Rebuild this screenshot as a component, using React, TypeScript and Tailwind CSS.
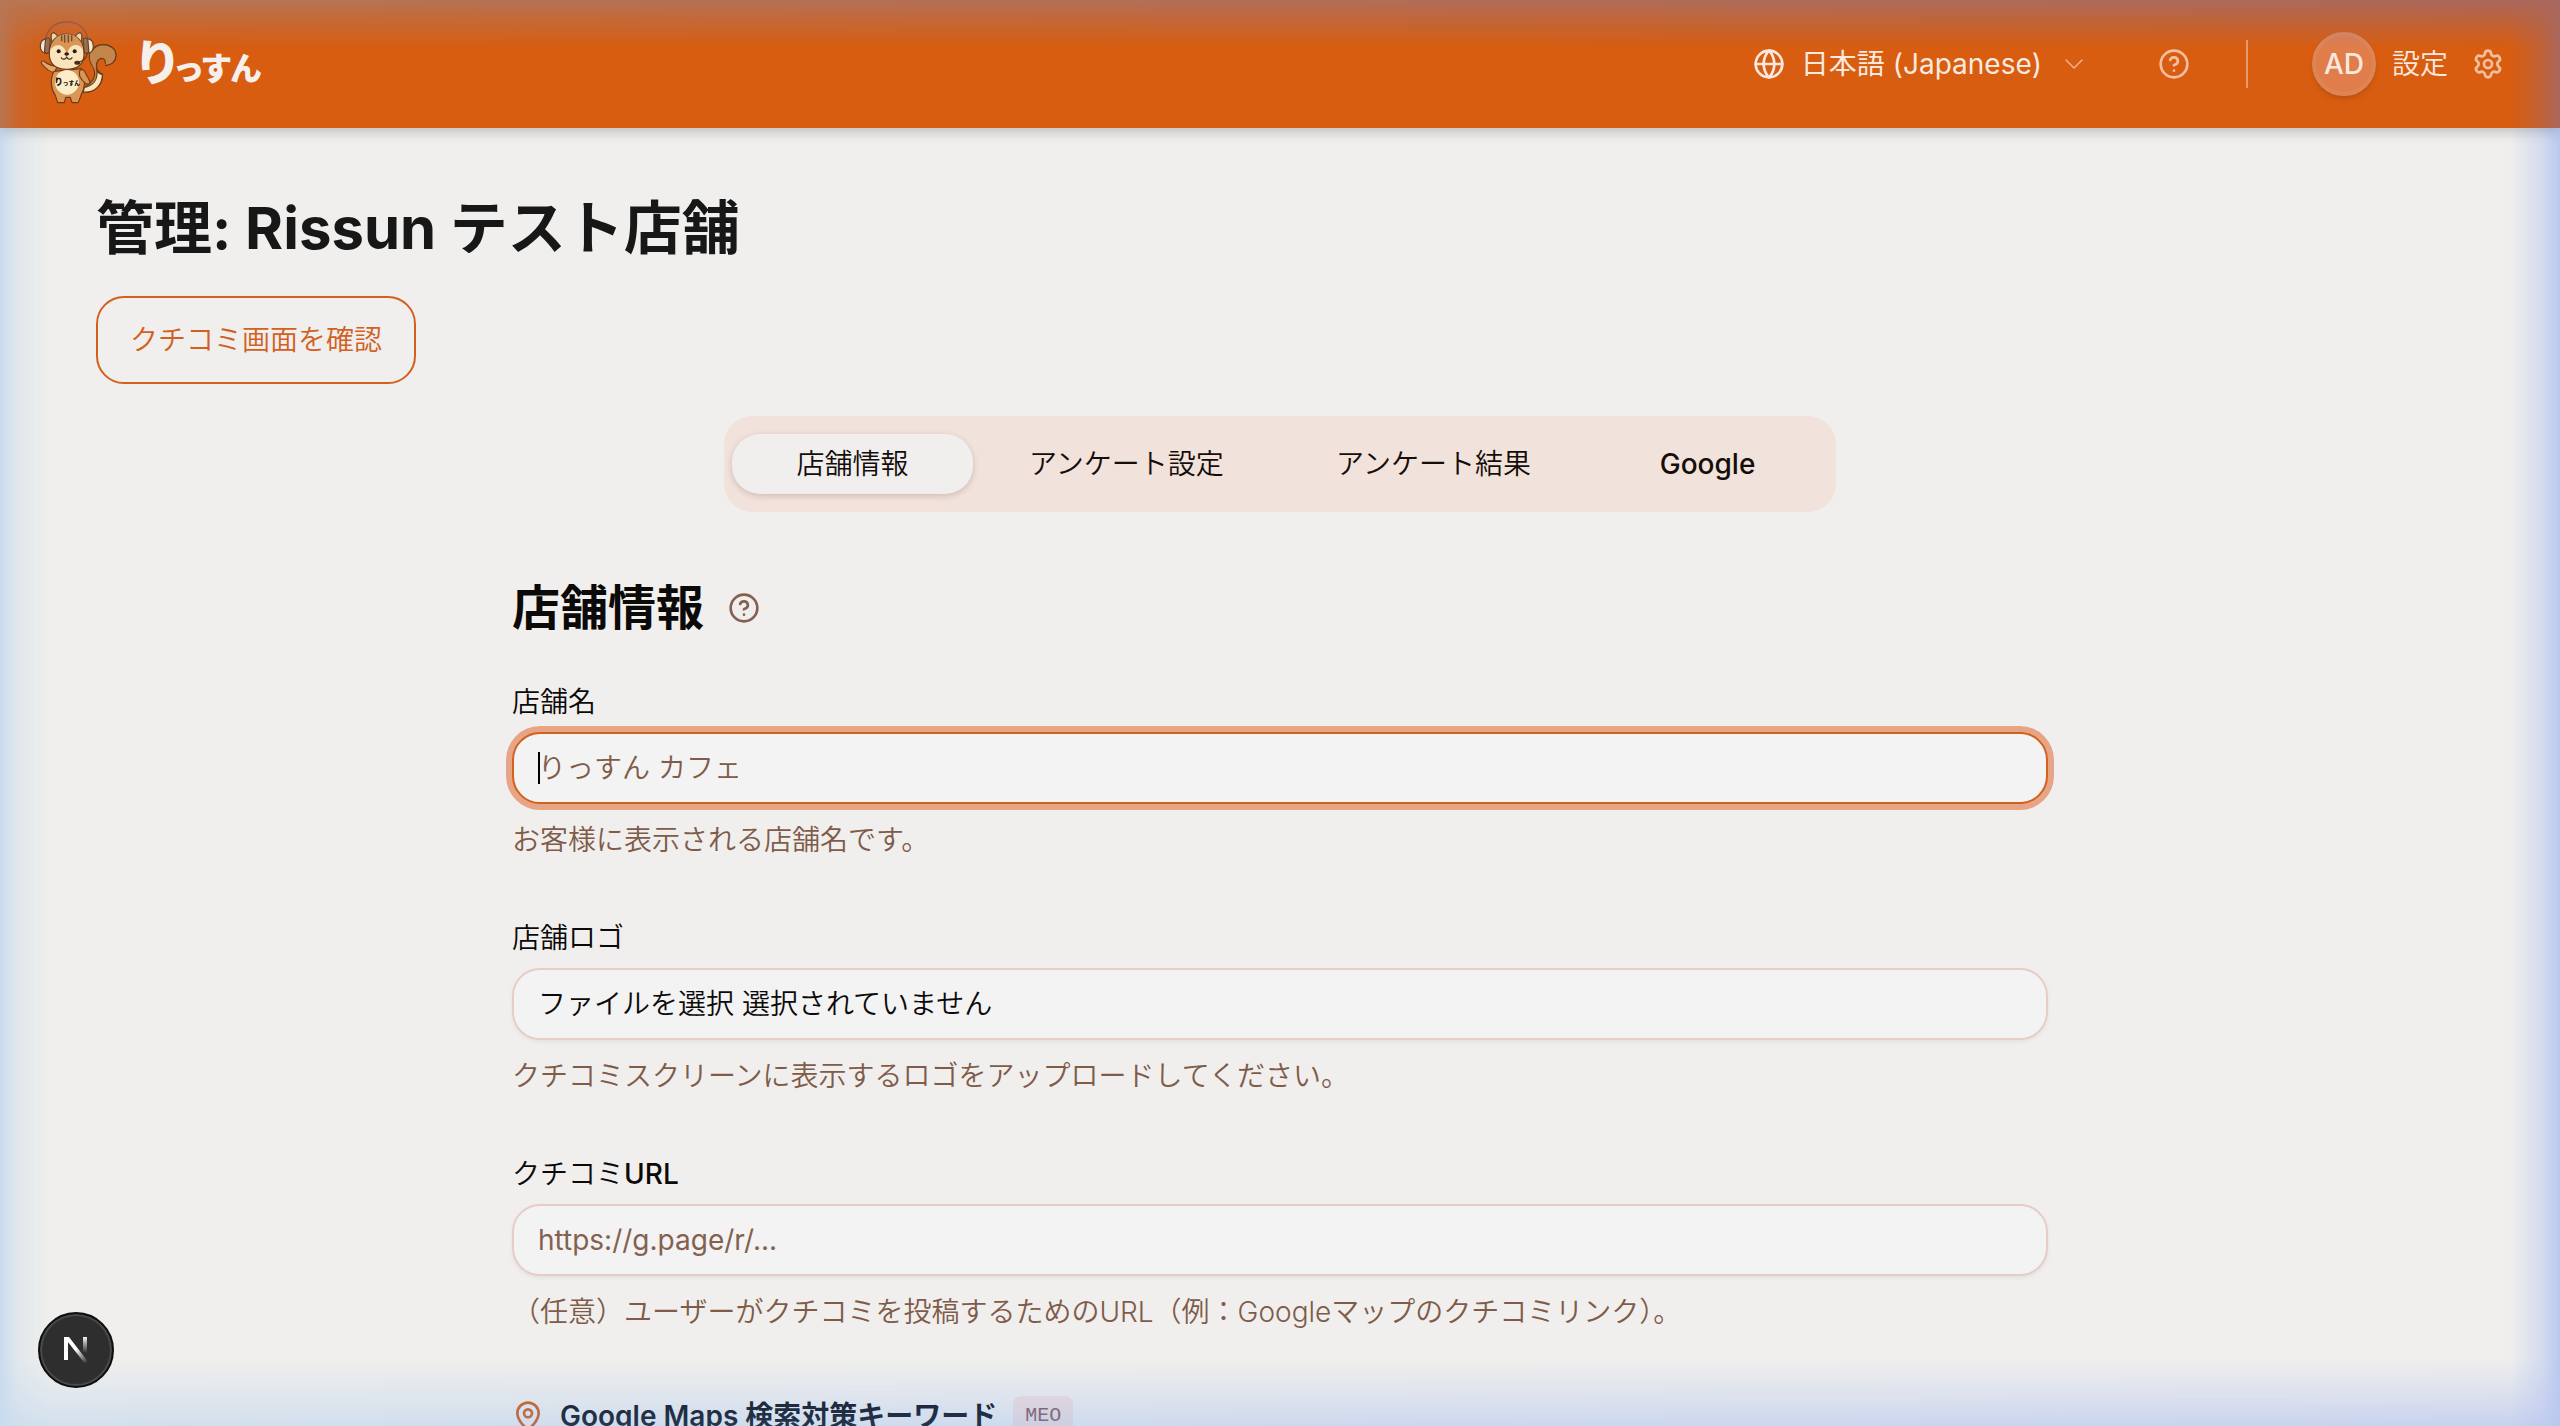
import type { ReactNode } from "react";
import { ChevronDown, CircleHelp, Globe, MapPin, Settings } from "lucide-react";

function Mascot() {
  return (
    <svg viewBox="24 24 240 276" className="h-[92px] w-20" role="img" aria-label="りっすん マスコット">
      <g stroke="#6b3d1c" strokeWidth="3.500" strokeLinejoin="round" strokeLinecap="round">
        <path
          d="M160 246c34 4 58-22 58-52-14-4-22-14-20-28 2-14 12-24 24-20 8 4 9 12 6 20 18-2 30-14 30-28 0-22-20-36-42-34-34 3-46 32-32 58 16 24 16 52-24 70z"
          fill="#c4864a"
        />
        <path d="M160 246c34 4 57-22 57-52-7-2-12-5-16-10 2 28-14 44-38 48z" fill="#fbe6bd" />
        <path
          d="M226 166c18 0 32-12 32-30 0-20-18-32-38-32-34 2-48 30-34 58 4 10 10 20 13 26-4-22 0-36 14-42 10-2 18 8 12 20z"
          fill="#c4864a"
          stroke="none"
        />
        <path d="M226 166c18 0 32-12 32-30 0-20-18-32-38-32-17 1-29 9-34 20" fill="none" />
        <path d="M217 192c-18-8-22-26-14-40 8-12 24-8 23 8" fill="none" />
        <path d="M74 188c-16-2-30-16-38-26-6-8 2-12 9-6 10 8 24 12 36 13z" fill="#e9a666" />
        <path
          d="M72 184c-14 26-8 56 4 72l7 22h20l4-16h14l5 16h19l8-22c12-20 16-52 2-80z"
          fill="#dc9552"
        />
        <path d="M148 184c6-8 14-6 18 4 8 16 16 24 13 33-10 6-22-8-30-22z" fill="#dc9552" />
        <path d="M66 96c-4-16-2-26 2-28 6 0 12 6 18 14zM153 96c4-16 2-26-2-28-6 0-12 6-18 14z" fill="#f6d9a8" />
        <path
          d="M58 136c-2-40 22-64 52-64s54 24 52 64c-2 30-22 42-52 42s-50-12-52-42z"
          fill="#fae4bb"
        />
        <path
          d="M60 122c6-32 24-49 50-49s46 17 51 49c-8-16-22-20-34-15-8 4-13 12-16 26-4-14-10-22-18-26-12-4-26 0-33 15z"
          fill="#dc9552"
          stroke="none"
        />
        <path d="M95 78v14M104 76v20M115 76v20M125 78v14" stroke="#7a4520" strokeWidth="4.500" />
        <path d="M47 88C52 54 76 36 110 36s58 18 64 52" fill="none" stroke="#a04a30" strokeWidth="4" />
        <path d="M50 86c-14 2-19 12-19 22s5 20 17 22z" fill="#f8e8cb" />
        <path d="M172 86c14 2 18 12 18 22s-5 20-16 22z" fill="#f8e8cb" />
        <rect x="45" y="84" width="14" height="46" rx="7" fill="#94704f" transform="rotate(5 52 107)" />
        <rect x="161" y="84" width="14" height="46" rx="7" fill="#94704f" transform="rotate(-5 168 107)" />
        <path d="M172 131c-2 14-12 22-28 26" fill="none" />
      </g>
      <ellipse cx="111" cy="217" rx="36" ry="37" fill="#fcecc9" />
      <ellipse cx="142" cy="158" rx="9" ry="6" fill="#4a2d18" />
      <circle cx="86" cy="124" r="6" fill="#2d1a10" />
      <circle cx="134" cy="124" r="6" fill="#2d1a10" />
      <ellipse cx="110" cy="132" rx="7" ry="5" fill="#2d1a10" />
      <path
        d="M94 143c4 7 14 6 16-3 2 9 12 10 16 3"
        fill="none"
        stroke="#4a2a15"
        strokeWidth="3.500"
        strokeLinecap="round"
      />
      <text x="111" y="225" textAnchor="middle" fontFamily="Noto Sans CJK JP" fontWeight="900" fill="#1c1310">
        <tspan fontSize="26">り</tspan>
        <tspan fontSize="17">っすん</tspan>
      </text>
    </svg>
  );
}

function Header() {
  return (
    <header className="relative z-10 flex h-32 shrink-0 items-center justify-between bg-[#d85d10] pr-14 pl-[38px] text-white shadow-[0_4px_12px_rgba(0,0,0,0.2)]">
      <a href="#home" className="flex items-center gap-5">
        <Mascot />
        <span className="flex items-baseline pt-1 font-black text-[#f5f0ec] [font-feature-settings:'palt']">
          <span className="text-[48px] leading-[64px]">り</span>
          <span className="text-[32px] leading-[64px]">っすん</span>
        </span>
      </a>
      <div className="flex items-center text-[28px] leading-10 text-[#fbe9df]">
        <label className="flex items-center">
          <Globe size={32} strokeWidth={2} className="mr-4" aria-hidden="true" />
          <select aria-label="言語" className="cursor-pointer appearance-none bg-transparent [field-sizing:content]">
            <option>日本語 (Japanese)</option>
          </select>
          <ChevronDown size={32} strokeWidth={1} className="ml-4 text-[#f3b594]" aria-hidden="true" />
        </label>
        <button type="button" aria-label="ヘルプ" className="ml-[68px] text-[#f3bfa3]">
          <CircleHelp size={32} strokeWidth={2} />
        </button>
        <span className="mx-14 h-12 w-0.5 bg-[#e59a70]" />
        <button type="button" className="ml-2 flex items-center font-[350]">
          <span className="mr-4 flex size-16 items-center justify-center rounded-full border-4 border-[#df8555] bg-[#e07d4b] text-[28px] font-medium shadow-md">
            AD
          </span>
          設定
          <Settings size={32} strokeWidth={2} className="ml-6 text-[#f3bfa3]" aria-hidden="true" />
        </button>
      </div>
    </header>
  );
}

const tabs = ["店舗情報", "アンケート設定", "アンケート結果", "Google"];

function Tabs() {
  return (
    <div
      role="tablist"
      className="mx-auto mt-8 grid h-24 w-full max-w-[1112px] grid-cols-[240fr_306fr_306fr_240fr] items-center rounded-[28px] bg-[#f1e2db] px-2 text-[28px] leading-10 text-[#150d0a]"
    >
      {tabs.map((name, i) => (
        <button
          key={name}
          type="button"
          role="tab"
          aria-selected={i === 0}
          className={
            i === 0
              ? "h-[60px] rounded-[28px] bg-[#f0efee] font-[350] shadow-[0_2px_6px_rgba(60,20,0,0.18)]"
              : i === 3
                ? "h-[60px] rounded-[28px] font-medium"
                : "h-[60px] rounded-[28px] font-[350]"
          }
        >
          {name}
        </button>
      ))}
    </div>
  );
}

function Field({ id, label, help, children }: { id: string; label: ReactNode; help: string; children: ReactNode }) {
  return (
    <div className="flex flex-col gap-4">
      <label htmlFor={id} className="text-[28px] leading-7 font-[350] text-[#0c0a09]">
        {label}
      </label>
      {children}
      <p className="text-[28px] leading-10 font-[350] text-[#7f5b49]">{help}</p>
    </div>
  );
}

function NextBadge() {
  return (
    <button
      type="button"
      aria-label="開発ツール"
      className="fixed bottom-[38px] left-[38px] z-20 flex size-[76px] items-center justify-center rounded-full border-2 border-[#0f0f0f] bg-[#2e2e2e] shadow-[inset_0_0_0_2px_#4a4a4a]"
    >
      <svg viewBox="0 0 28 30" className="h-[30px] w-7" fill="none">
        <defs>
          <linearGradient id="diag" x1="14" y1="14" x2="25" y2="28" gradientUnits="userSpaceOnUse">
            <stop stopColor="#fff" />
            <stop offset="1" stopColor="#fff" stopOpacity="0" />
          </linearGradient>
          <linearGradient id="bar" x1="0" y1="1" x2="0" y2="18" gradientUnits="userSpaceOnUse">
            <stop stopColor="#fff" />
            <stop offset="1" stopColor="#fff" stopOpacity="0" />
          </linearGradient>
        </defs>
        <path d="M2 25V2h4v23z" fill="#fff" />
        <path d="M2 2h5l20 26-3 2z" fill="url(#diag)" />
        <path d="M21 2h4v17h-4z" fill="url(#bar)" />
      </svg>
    </button>
  );
}

export default function App() {
  return (
    <div
      lang="ja"
      className="flex h-screen flex-col overflow-hidden bg-[#f0efed] font-['Inter','Noto_Sans_CJK_JP',sans-serif]"
    >
      <Header />
      <main className="flex-1 px-24 pt-16">
        <h1 className="text-[58px] leading-[72px] font-bold text-[#171717]">管理: Rissun テスト店舗</h1>
        <button
          type="button"
          className="mt-8 block h-[88px] rounded-[28px] border-2 border-[#d2601f] px-8 text-[28px] leading-10 font-[350] text-[#d2601f]"
        >
          クチコミ画面を確認
        </button>
        <Tabs />
        <section className="mx-auto mt-16 max-w-[1536px]">
          <div className="flex items-center gap-6">
            <h2 className="text-[48px] leading-[64px] font-bold text-[#0c0a09]">店舗情報</h2>
            <button type="button" aria-label="店舗情報のヘルプ" className="text-[#84614f]">
              <CircleHelp size={32} strokeWidth={2} />
            </button>
          </div>
          <form className="mt-12 flex flex-col gap-16">
            <Field id="name" label="店舗名" help="お客様に表示される店舗名です。">
              <div className="relative">
                <input
                  id="name"
                  type="text"
                  placeholder="りっすん カフェ"
                  className="block h-[72px] w-full rounded-[28px] border-2 border-[#d2601f] bg-[#f3f3f3] px-6 text-[28px] font-[350] text-[#0c0a09] ring-6 ring-[#e8a585] outline-none placeholder:text-[#7f5b49]"
                />
                <span className="absolute top-5 left-[26px] h-8 w-0.5 bg-black" />
              </div>
            </Field>
            <Field id="logo" label="店舗ロゴ" help="クチコミスクリーンに表示するロゴをアップロードしてください。">
              <label className="flex h-[72px] w-full cursor-pointer items-center rounded-[28px] border-2 border-[#e5cec3] bg-[#f3f3f3] px-6 text-[28px] font-[350] text-[#0c0a09] shadow-[0_2px_4px_rgba(0,0,0,0.06)]">
                ファイルを選択 選択されていません
                <input id="logo" type="file" className="sr-only" />
              </label>
            </Field>
            <Field
              id="url"
              label={
                <>
                  クチコミ<span className="font-medium">URL</span>
                </>
              }
              help="（任意）ユーザーがクチコミを投稿するためのURL（例：Googleマップのクチコミリンク）。"
            >
              <input
                id="url"
                type="url"
                placeholder="https://g.page/r/..."
                className="h-[72px] w-full rounded-[28px] border-2 border-[#e5cec3] bg-[#f3f3f3] px-6 text-[28px] text-[#0c0a09] shadow-[0_2px_4px_rgba(0,0,0,0.06)] outline-none placeholder:text-[#84614f]"
              />
            </Field>
            <div className="flex items-center gap-4 text-[28px] leading-10 font-semibold text-[#12151c]">
              <MapPin size={32} strokeWidth={2} className="text-[#d2601f]" aria-hidden="true" />
              <h3>Google Maps 検索対策キーワード</h3>
              <span className="rounded-lg bg-[#f0dfdd] px-3 font-['Liberation_Mono',monospace] text-[20px] font-normal text-[#84615f]">
                MEO
              </span>
            </div>
          </form>
        </section>
      </main>
      <NextBadge />
      <div className="pointer-events-none fixed inset-0 z-10 bg-[linear-gradient(to_right,rgba(110,175,240,0.3),rgba(80,125,245,0.34))] [mask-image:linear-gradient(to_right,black,rgba(0,0,0,0.35)_18px,transparent_50px),linear-gradient(to_left,black,rgba(0,0,0,0.5)_18px,transparent_50px),linear-gradient(to_bottom,black,rgba(0,0,0,0.6)_18px,transparent_48px),linear-gradient(to_top,rgba(0,0,0,0.75),rgba(0,0,0,0.4)_28px,transparent_68px)]" />
    </div>
  );
}
